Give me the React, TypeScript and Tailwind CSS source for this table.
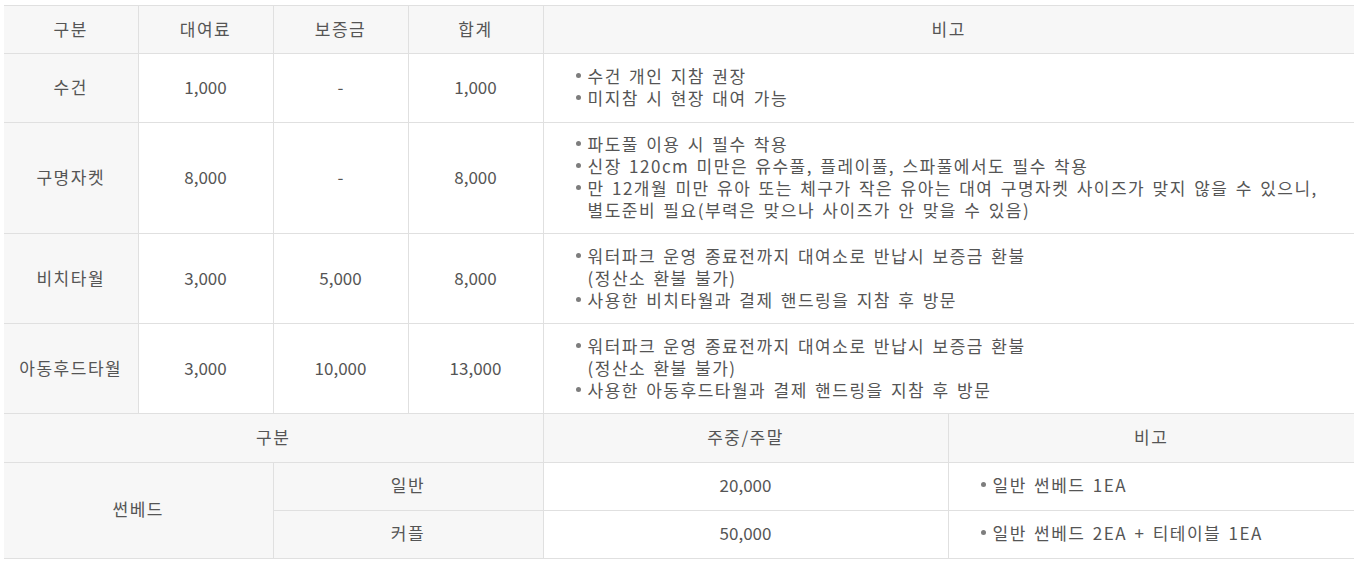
import React from "react";

type Rental = {
  name: string;
  fee: string;
  deposit: string;
  total: string;
  height: string;
  notes: string[][];
};

const rentals: Rental[] = [
  {
    name: "수건",
    fee: "1,000",
    deposit: "-",
    total: "1,000",
    height: "h-[69px]",
    notes: [["수건 개인 지참 권장"], ["미지참 시 현장 대여 가능"]],
  },
  {
    name: "구명자켓",
    fee: "8,000",
    deposit: "-",
    total: "8,000",
    height: "h-[111px]",
    notes: [
      ["파도풀 이용 시 필수 착용"],
      ["신장 120cm 미만은 유수풀, 플레이풀, 스파풀에서도 필수 착용"],
      [
        "만 12개월 미만 유아 또는 체구가 작은 유아는 대여 구명자켓 사이즈가 맞지 않을 수 있으니,",
        "별도준비 필요(부력은 맞으나 사이즈가 안 맞을 수 있음)",
      ],
    ],
  },
  {
    name: "비치타월",
    fee: "3,000",
    deposit: "5,000",
    total: "8,000",
    height: "h-[90px]",
    notes: [
      ["워터파크 운영 종료전까지 대여소로 반납시 보증금 환불", "(정산소 환불 불가)"],
      ["사용한 비치타월과 결제 핸드링을 지참 후 방문"],
    ],
  },
  {
    name: "아동후드타월",
    fee: "3,000",
    deposit: "10,000",
    total: "13,000",
    height: "h-[90px]",
    notes: [
      ["워터파크 운영 종료전까지 대여소로 반납시 보증금 환불", "(정산소 환불 불가)"],
      ["사용한 아동후드타월과 결제 핸드링을 지참 후 방문"],
    ],
  },
];

const sunbeds = [
  { type: "일반", price: "20,000", note: "일반 썬베드 1EA" },
  { type: "커플", price: "50,000", note: "일반 썬베드 2EA + 티테이블 1EA" },
];

function Notes({ items }: { items: string[][] }) {
  return (
    <ul className="leading-[22px]">
      {items.map((lines, i) => (
        <li key={i} className="flex">
          <span className="flex h-[21px] w-[12px] shrink-0 items-center">
            <span className="size-[5px] rounded-full bg-[#7d7d7d]" />
          </span>
          <span className="whitespace-nowrap">
            {lines.map((line, j) => (
              <span key={j} className="block">
                {line}
              </span>
            ))}
          </span>
        </li>
      ))}
    </ul>
  );
}

const th = "bg-[#f7f7f7] font-normal text-center border-b border-[#e0e0e0] pb-[2px]";
const td = "text-center border-b border-[#e0e0e0] pb-[2px] tracking-normal [word-spacing:normal]";

export default function App() {
  return (
    <div className="min-h-screen bg-white pl-[4px] pt-[5px] font-['Noto_Sans_CJK_KR',sans-serif] text-[17px] tracking-[1.5px] text-[#555] [word-spacing:2px]">
      {/* 대여 요금 */}
      <table className="w-[1350px] table-fixed border-collapse border-t border-[#e0e0e0]">
        <colgroup>
          <col className="w-[134px]" />
          <col className="w-[135px]" />
          <col className="w-[135px]" />
          <col className="w-[135px]" />
          <col />
        </colgroup>
        <thead>
          <tr>
            <th className={`${th} h-[48px] border-r`}>구분</th>
            <th className={`${th} border-r`}>대여료</th>
            <th className={`${th} border-r`}>보증금</th>
            <th className={`${th} border-r`}>합계</th>
            <th className={th}>비고</th>
          </tr>
        </thead>
        <tbody>
          {rentals.map((r) => (
            <tr key={r.name}>
              <th className={`${th} ${r.height} border-r`}>{r.name}</th>
              <td className={`${td} border-r`}>{r.fee}</td>
              <td className={`${td} border-r`}>{r.deposit}</td>
              <td className={`${td} border-r`}>{r.total}</td>
              <td className="border-b border-[#e0e0e0] pb-[2px] pl-[32px] align-middle">
                <Notes items={r.notes} />
              </td>
            </tr>
          ))}
        </tbody>
      </table>

      {/* 썬베드 */}
      <table className="w-[1350px] table-fixed border-collapse">
        <colgroup>
          <col className="w-[269px]" />
          <col className="w-[270px]" />
          <col className="w-[405px]" />
          <col />
        </colgroup>
        <thead>
          <tr>
            <th colSpan={2} className={`${th} h-[48px] border-r`}>
              구분
            </th>
            <th className={`${th} border-r`}>주중/주말</th>
            <th className={th}>비고</th>
          </tr>
        </thead>
        <tbody>
          {sunbeds.map((s, i) => (
            <tr key={s.type}>
              {i === 0 && (
                <th rowSpan={2} className={`${th} border-r`}>
                  썬베드
                </th>
              )}
              <th className={`${th} h-[48px] border-r`}>{s.type}</th>
              <td className={`${td} border-r`}>{s.price}</td>
              <td className="border-b border-[#e0e0e0] pb-[2px] pl-[32px] align-middle">
                <Notes items={[[s.note]]} />
              </td>
            </tr>
          ))}
        </tbody>
      </table>
    </div>
  );
}
